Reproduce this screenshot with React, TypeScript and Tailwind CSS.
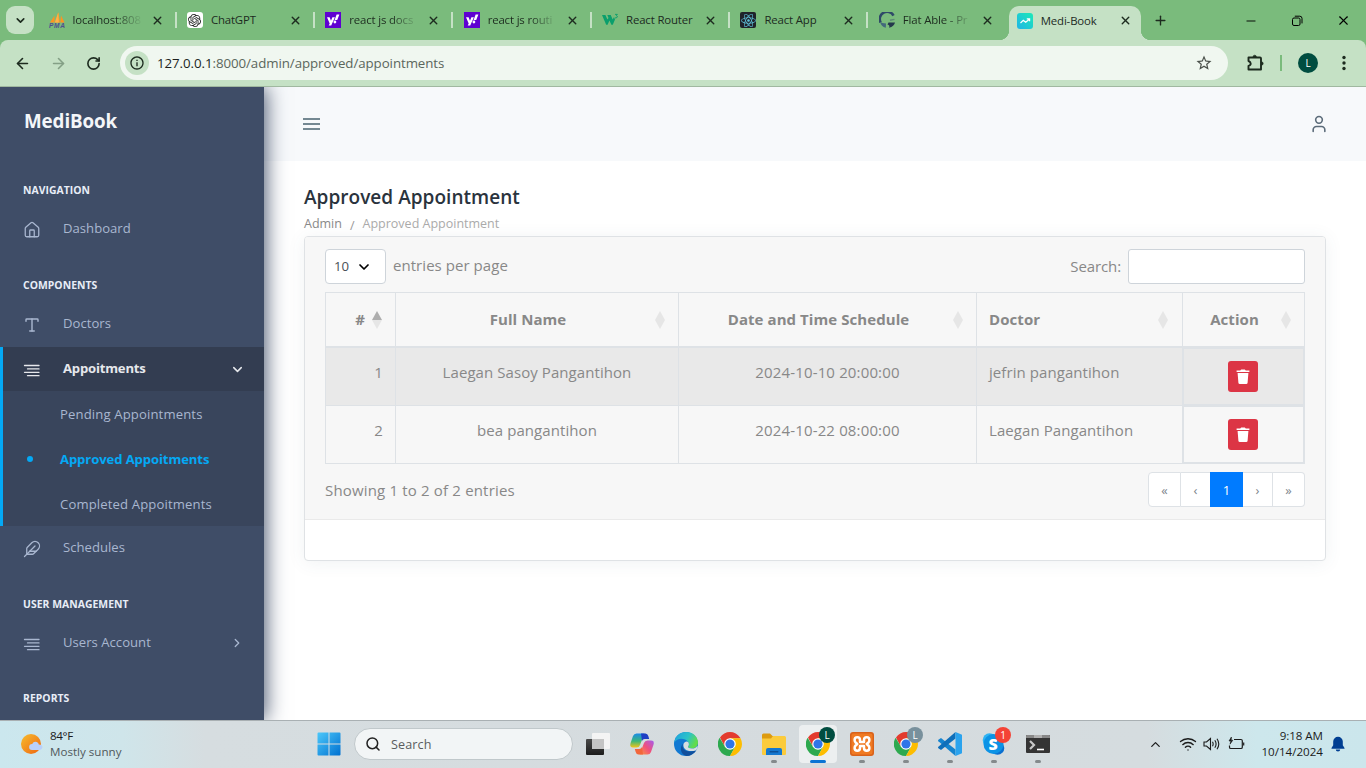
import React from "react";
import {
  ArrowLeft,
  ArrowRight,
  ChevronDown,
  ChevronRight,
  ChevronUp,
  Feather,
  Home,
  Minus,
  Plus,
  RotateCw,
  Search,
  Type,
  User,
  Wifi,
  X,
} from "lucide-react";
import { MdStarOutline, MdOutlineInfo } from "react-icons/md";
import { FaReact } from "react-icons/fa";
import { SiOpenai } from "react-icons/si";

/* ---------- favicons ---------- */

function PmaIcon() {
  return (
    <svg viewBox="0 0 16 16" className="size-4">
      <path d="M1 10.500 5.500 3.500V10.500zM5.800 10.500 9.300.3 11 10.500zM11.300 10.500 12 3.500l3.500 7z" fill="#ff9320" />
      <path d="M5.800 10.500 9.300.3l.5 10.200z" fill="#ffb347" />
      <text x="0" y="15.6" fontSize="6.6" fontWeight="800" fontStyle="italic" fill="#4f4f8e" fontFamily="Liberation Sans, sans-serif" textLength="16">PMA</text>
    </svg>
  );
}

function GptIcon() {
  return (
    <span className="flex size-4 items-center justify-center rounded-[3px] bg-white">
      <SiOpenai size={13} color="#222" />
    </span>
  );
}

function YahooIcon() {
  return (
    <svg viewBox="0 0 16 16" className="size-4">
      <rect width="16" height="16" fill="#5f01d1" />
      <path d="M2 5.2h2.6L6 8.7l1.4-3.5h2.5L6.2 13.6H3.7l1-2.2z" fill="#fff" />
      <path d="M11.6 2.6h2.8L12.2 8H9.6z" fill="#fff" />
      <circle cx="9.9" cy="10" r="1.4" fill="#fff" />
    </svg>
  );
}

function W3Icon() {
  return (
    <svg viewBox="0 0 16 16" className="size-4">
      <path d="M0 3h3.400l2 4.500L6.500 6 5.300 3h3.400l2 4.500L12 5l1 2.600-2.200 5.200H9.400L7.400 8.600 5.600 12.800H4.200z" fill="#0a9f6c" />
      <path d="M13 2.400h2.400l-1.100 1.300q1.200.1 1.200 1.100T13 6" fill="none" stroke="#0a9f6c" strokeWidth=".9" />
    </svg>
  );
}

function ReactIcon() {
  return (
    <span className="flex size-4 items-center justify-center rounded-[2px] bg-[#20232a]">
      <FaReact size={15} color="#5fc3dc" />
    </span>
  );
}

function FlatIcon() {
  return (
    <svg viewBox="0 0 16 16" className="size-4">
      <path d="M14.500 3.600A7 7 0 0 0 1.600 10.500" fill="none" stroke="#2f4a68" strokeWidth="2.600" />
      <path d="M1.200 10A7 7 0 0 0 6.800 15.700L7 11.500 3.500 11z" fill="#43697c" />
      <path d="M9.500 10.500H16q-.8 4-6 5.300 1.300-2.300-1.500-3.300z" fill="#24384c" />
      <path d="M11 8.200 15.500 7.400" stroke="#5d8a78" strokeWidth="1.400" />
    </svg>
  );
}

function MediIcon() {
  return (
    <svg viewBox="0 0 16 16" className="size-4">
      <defs>
        <linearGradient id="medi" x1="0" y1="1" x2="1" y2="0">
          <stop offset="0" stopColor="#1fb5e8" />
          <stop offset="1" stopColor="#1de9b6" />
        </linearGradient>
      </defs>
      <rect width="16" height="16" rx="3" fill="url(#medi)" />
      <path d="M3.5 10 6.3 7.4l2.4 1.8 3.6-3M9.8 5.8h2.8v2.4" fill="none" stroke="#fff" strokeWidth="1.2" />
    </svg>
  );
}

const tabs = [
  { title: "localhost:808", icon: <PmaIcon /> },
  { title: "ChatGPT", icon: <GptIcon /> },
  { title: "react js docs", icon: <YahooIcon /> },
  { title: "react js routi", icon: <YahooIcon /> },
  { title: "React Router", icon: <W3Icon /> },
  { title: "React App", icon: <ReactIcon /> },
  { title: "Flat Able - Pr", icon: <FlatIcon /> },
  { title: "Medi-Book", icon: <MediIcon />, active: true },
];

const faded = [0, 2, 3, 6];

function TabStrip() {
  return (
    <div className="flex h-10 shrink-0 items-start bg-[#7abb7c] text-[#1d2b1f]">
      <div className="mt-1.5 ml-1.5 flex size-7 items-center justify-center rounded-[9px] bg-[#c5e1c5]">
        <ChevronDown size={13} strokeWidth={3} />
      </div>
      <div className="ml-[5px] flex">
        {tabs.map((tab, i) => (
          <div
            key={i}
            className={
              tab.active
                ? "relative mt-1.5 ml-px flex h-[34px] w-[132px] items-center rounded-t-[10px] bg-[#c5e1c5] pl-2"
                : "flex h-10 w-[138.4px] items-center pl-[9.5px]"
            }
          >
            {tab.active && (
              <>
                <span className="absolute bottom-0 -left-2.5 size-2.5 bg-[radial-gradient(circle_at_0_0,transparent_10px,#c5e1c5_10.5px)]" />
                <span className="absolute -right-2.5 bottom-0 size-2.5 bg-[radial-gradient(circle_at_100%_0,transparent_10px,#c5e1c5_10.5px)]" />
              </>
            )}
            <span className={tab.active ? "-mt-[5px]" : ""}>{tab.icon}</span>
            <span
              className={
                (tab.active ? "-mt-[5px] " : "") +
                (faded.includes(i) ? "[mask-image:linear-gradient(to_right,#000_60%,transparent)] " : "") +
                "ml-2 w-[70px] text-[11.4px] leading-4 tracking-[-0.15px] whitespace-nowrap"
              }
            >
              {tab.title}
            </span>
            <X size={13} strokeWidth={2.6} className={tab.active ? "-mt-[5px] ml-2" : "ml-2"} />
            {!tab.active && i < 6 && <span className="ml-[11px] h-4 w-0.5 bg-[#c5e1c5]" />}
          </div>
        ))}
      </div>
      <Plus size={15} strokeWidth={2.2} className="mt-[13px] ml-[12.5px]" />
      <div className="mt-[13px] mr-[15px] ml-auto flex items-center gap-[33px] text-black">
        <Minus size={14} strokeWidth={1.6} />
        <svg viewBox="0 0 12 12" className="size-3" fill="none" stroke="currentColor">
          <rect x="1.5" y="3" width="7.5" height="7.5" rx="1.5" />
          <path d="M3.8 1.2h5A2.2 2.2 0 0 1 11 3.4v5" />
        </svg>
        <X size={15} strokeWidth={1.8} />
      </div>
    </div>
  );
}

function AddressBar() {
  return (
    <div className="h-[47px] shrink-0 bg-[#7abb7c]">
      <div className="flex h-full items-center rounded-t-lg border-b border-[#a0b8a0] bg-[#c5e1c5] text-[#1d2b1f]">
        <ArrowLeft size={17} strokeWidth={2.3} className="ml-[14px]" />
        <ArrowRight size={17} strokeWidth={2.3} className="ml-[19px] text-[#84a086]" />
        <RotateCw size={15} strokeWidth={2.6} className="ml-[19px]" />
        <div className="ml-[19px] flex h-[34px] w-[1108px] items-center rounded-full bg-[#f0f7f0] pl-[5px]">
          <div className="flex size-6 items-center justify-center rounded-full bg-[#c5e1c5]">
            <MdOutlineInfo size={16} />
          </div>
          <span className="mt-px ml-2 text-[13.3px] tracking-[-0.07px] text-[#5b665c]">
            <span className="text-[#1d1f1d]">127.0.0.1</span>:8000/admin/approved/appointments
          </span>
          <MdStarOutline size={18} className="mr-[15px] ml-auto text-[#4a504a]" />
        </div>
        <svg viewBox="0 0 18 18" className="ml-[18px] size-[18px]" fill="none" stroke="currentColor" strokeWidth="1.900" strokeLinejoin="round">
          <path d="M2.500 3.500H14q1 0 1 1V15.500H2.500V12q2.200-.6 2.200-2.400T2.500 7z" />
          <path d="M7 3Q7 1.200 8.700 1.200T10.400 3zM15.500 7.800q1.700 0 1.700 1.700t-1.700 1.700z" fill="currentColor" strokeWidth=".6" />
        </svg>
        <span className="ml-4 h-4 w-0.5 bg-[#7abb7c]" />
        <span className="ml-4 flex size-5 items-center justify-center rounded-full bg-[#004d40] text-[10px] text-white">L</span>
        <svg viewBox="0 0 4 16" className="ml-6 h-4 w-1" fill="#1d2b1f">
          <circle cx="2" cy="2.500" r="1.700" />
          <circle cx="2" cy="8" r="1.700" />
          <circle cx="2" cy="13.500" r="1.700" />
        </svg>
      </div>
    </div>
  );
}

/* ---------- sidebar ---------- */

function Caption({ children }: { children: React.ReactNode }) {
  return (
    <div className="h-[51px] pt-[26px] pl-[23px] text-[10.4px] leading-4 font-bold tracking-[0.04px] text-[#e8edf7]">
      {children}
    </div>
  );
}

function NavItem({ icon, label, arrow }: { icon: React.ReactNode; label: string; arrow?: boolean }) {
  return (
    <div className="flex h-11 items-center pl-[23px] text-[#a9b7d0]">
      <span className="mt-px w-10">{icon}</span>
      <span className="text-[13.1px] tracking-[0.02px]">{label}</span>
      {arrow && <ChevronRight size={14} strokeWidth={2.2} className="mr-5 ml-auto" />}
    </div>
  );
}

function AlignRightIcon() {
  return (
    <svg viewBox="0 0 18 18" className="size-[18px]" stroke="currentColor" strokeWidth="1.3" strokeLinecap="round">
      <path d="M1.500 4.500H16M4.500 7.900H16M1.500 11.300H16M4.500 14.700H16" />
    </svg>
  );
}

function Sidebar() {
  return (
    <aside className="z-10 w-[264px] shrink-0 bg-[#3f4d67] shadow-[1px_0_20px_0_#3f4d67]">
      <div className="h-[69px] pt-[20px] pl-6 text-[18.8px] leading-7 font-bold text-[#f4f6f9]">
        <span className="tracking-[-0.1px]">MediBook</span>
      </div>
      <Caption>NAVIGATION</Caption>
      <NavItem icon={<Home size={18} strokeWidth={1.7} />} label="Dashboard" />
      <Caption>COMPONENTS</Caption>
      <NavItem icon={<Type size={18} strokeWidth={1.9} />} label="Doctors" />
      <div className="mt-px border-l-[3px] border-[#04a9f5]">
        <div className="flex h-11 items-center bg-[#333d51] pl-5 text-[#e6e8ec]">
          <span className="mt-px w-10"><AlignRightIcon /></span>
          <span className="text-[13.1px] font-bold tracking-[-0.2px]">Appoitments</span>
          <ChevronDown size={15} strokeWidth={2.4} className="mr-[19px] ml-auto" />
        </div>
        <div className="bg-[#39455c] text-[13.1px] tracking-[0.14px] text-[#a9b7d0]">
          <div className="flex h-[45px] items-center pt-0.5 pl-[57px]">Pending Appointments</div>
          <div className="flex h-[45px] items-center pl-6 font-bold tracking-[-0.1px] text-[#04a9f5]">
            <span className="size-1.5 rounded-full bg-[#04a9f5]" />
            <span className="mt-0.5 ml-[27px]">Approved Appoitments</span>
          </div>
          <div className="flex h-[45px] items-center pt-0.5 pl-[57px]">Completed Appoitments</div>
        </div>
      </div>
      <NavItem icon={<Feather size={18} strokeWidth={1.7} />} label="Schedules" />
      <Caption>USER MANAGEMENT</Caption>
      <NavItem icon={<AlignRightIcon />} label="Users Account" arrow />
      <div className="-mt-px"><Caption>REPORTS</Caption></div>
    </aside>
  );
}

/* ---------- content ---------- */

function SortMark({ asc }: { asc?: boolean }) {
  return (
    <svg viewBox="0 0 10 18" className="h-[18px] w-2.5">
      <path d="M0 9 5 0l5 9z" fill={asc ? "#aeaeae" : "#e6e6e6"} />
      <path d="M0 9 5 18l5-9z" fill="#e6e6e6" />
    </svg>
  );
}

function TrashButton() {
  return (
    <span className="-ml-0.5 flex h-[31px] w-[30px] items-center justify-center rounded-[3px] bg-[#dc3545]">
      <svg viewBox="0 0 14 16" className="ml-px h-4 w-3.5" fill="#fff">
        <path d="M.6 1.500h3.600L5.200.6h3.600l1 .9h3.600v1.600H.6z" />
        <path d="M1.600 4h10.800l-.8 9.700q-.1 1.300-1.400 1.300H3.800q-1.300 0-1.400-1.300z" />
      </svg>
    </span>
  );
}

const rows = [
  { n: 1, name: "Laegan Sasoy Pangantihon", at: "2024-10-10 20:00:00", doctor: "jefrin pangantihon" },
  { n: 2, name: "bea pangantihon", at: "2024-10-22 08:00:00", doctor: "Laegan Pangantihon" },
];

const cols = "grid grid-cols-[70px_283px_298px_206px_122px] border-l border-[#dee2e6]";

function DataTable() {
  return (
    <div className="mt-2 w-[980px] tracking-[0.07px]">
      <div className={cols + " h-14 border-t border-b-2 font-bold"}>
        <div className="flex items-center justify-end border-r border-[#dee2e6] pr-[13px]">
          <span className="mr-[7px]">#</span>
          <SortMark asc />
        </div>
        <div className="flex items-center border-r border-[#dee2e6] pr-[13px]">
          <span className="flex-1 pl-[5px] text-center">Full Name</span>
          <SortMark />
        </div>
        <div className="flex items-center border-r border-[#dee2e6] pr-[13px]">
          <span className="flex-1 pl-[5px] text-center">Date and Time Schedule</span>
          <SortMark />
        </div>
        <div className="flex items-center justify-between border-r border-[#dee2e6] pr-[14px] pl-3">
          <span>Doctor</span>
          <SortMark />
        </div>
        <div className="flex items-center border-r border-[#dee2e6] pr-[13px]">
          <span className="flex-1 pl-[5px] text-center">Action</span>
          <SortMark />
        </div>
      </div>
      {rows.map((r, i) => (
        <div key={r.n} className={cols + " h-[58px] leading-6" + (i === 0 ? " bg-[#e9e9e9]" : "")}>
          <div className="border-r border-b border-[#dee2e6] pt-3 pr-3 text-right">{r.n}</div>
          <div className="border-r border-b border-[#dee2e6] pt-3 text-center">{r.name}</div>
          <div className="border-r border-b border-[#dee2e6] pt-3 text-center tracking-[0.15px]">{r.at}</div>
          <div className="border-r border-b border-[#dee2e6] pt-3 pl-3">{r.doctor}</div>
          <div className="flex justify-center border-t border-r-2 border-b-2 border-l border-[#dee2e6] pt-3">
            <TrashButton />
          </div>
        </div>
      ))}
    </div>
  );
}

function Main() {
  return (
    <main className="flex min-w-0 flex-1 flex-col bg-white">
      <header className="flex h-[74px] shrink-0 items-center justify-between bg-[#f7f9fb] pr-[37px] pl-[38px]">
        <div className="ml-px flex w-[17px] flex-col gap-[3px]">
          <span className="h-0.5 bg-[#748892]" />
          <span className="h-0.5 bg-[#748892]" />
          <span className="h-0.5 bg-[#748892]" />
        </div>
        <User size={20} strokeWidth={1.9} className="text-[#5b6b79]" />
      </header>
      <div className="pt-6 pr-10 pl-10">
        <h1 className="text-[19px] leading-6 font-semibold tracking-[0.03px] text-[#2a333d]">Approved Appointment</h1>
        <div className="mt-[5px] flex h-[22px] text-[12.5px] leading-[19px] text-[#888]">
          <span>Admin</span>
          <span className="mt-0.5 ml-2 text-[#999]">/</span>
          <span className="ml-2 text-[#aaa]">Approved Appointment</span>
        </div>
        <section className="h-[325px] w-[1022px] rounded-[4px] border border-[#dfe2e5] bg-white shadow-[0_2px_18px_0_rgba(69,90,100,0.08)]">
          <div className="h-[283px] rounded-t-[3px] border-b border-[#eaeaea] bg-[#f7f7f7] pt-3 pl-5 text-[15px] text-[#888]">
            <div className="flex h-[35px] w-[980px] items-center">
              <div className="flex h-[35px] w-[61px] items-center rounded-[4px] border border-[#ced4da] bg-white pl-2 text-[13.2px] text-[#495057]">
                <span className="mt-px">10</span>
                <ChevronDown size={16} strokeWidth={2.6} className="ml-[7px] text-black" />
              </div>
              <span className="-mt-0.5 ml-[7px] tracking-[0.05px]">entries per page</span>
              <span className="ml-auto tracking-[-0.1px]">Search:</span>
              <div className="ml-[7px] h-[35px] w-[177px] rounded-[3px] border border-[#ced4da] bg-white" />
            </div>
            <DataTable />
            <div className="mt-2 flex w-[980px] items-center justify-between">
              <span className="mt-0.5 tracking-[0.17px]">Showing 1 to 2 of 2 entries</span>
              <div className="flex h-[35px] w-[157px] rounded-[4px] text-[13px] leading-[34px] text-[#7d858c]">
                <span className="w-[33px] rounded-l-[4px] border border-[#dee2e6] bg-white text-center">«</span>
                <span className="w-[29px] border-y border-[#dee2e6] bg-white text-center">‹</span>
                <span className="w-[33px] bg-[#007bff] text-center text-[13.200px] leading-[36px] text-white">1</span>
                <span className="w-[30px] border-y border-r border-[#dee2e6] bg-white text-center">›</span>
                <span className="w-8 rounded-r-[4px] border-y border-r border-[#dee2e6] bg-white text-center">»</span>
              </div>
            </div>
          </div>
        </section>
      </div>
    </main>
  );
}

/* ---------- taskbar ---------- */

function ChromeLogo() {
  return (
    <svg viewBox="0 0 24 24" className="size-6">
      <path d="M12 6.200h10.500L22 5.400A12 12 0 0 0 2 5.400l4.800 9z" fill="#e33b2e" />
      <path d="m7 14.800-5.400-9A12 12 0 0 0 12 24l5-9z" fill="#2da94f" />
      <path d="M12 6.200h10.500A12 12 0 0 1 12 24l5-9z" fill="#fdbd00" />
      <circle cx="12" cy="12" r="5.800" fill="#fff" />
      <circle cx="12" cy="12" r="4.600" fill="#2f75e8" />
    </svg>
  );
}

function WindowsLogo() {
  return (
    <svg viewBox="0 0 24 24" className="size-6">
      <defs>
        <linearGradient id="win" x1="0" y1="0" x2="1" y2="1">
          <stop offset="0" stopColor="#4cc8fa" />
          <stop offset="1" stopColor="#0070d0" />
        </linearGradient>
      </defs>
      <path d="M1.500.5h10v11h-11v-10q0-1 1-1zM12.500.5h10q1 0 1 1v10h-11zM.5 12.500h11v11h-10q-1 0-1-1zM12.500 12.500h11v10q0 1-1 1h-10z" fill="url(#win)" />
    </svg>
  );
}

function TaskViewLogo() {
  return (
    <svg viewBox="0 0 24 24" className="size-6">
      <defs>
        <linearGradient id="tvBack" x1="0" y1="0" x2="0" y2="1">
          <stop offset="0" stopColor="#4a4a4a" />
          <stop offset="1" stopColor="#1c1c1c" />
        </linearGradient>
      </defs>
      <rect x="0" y="7" width="18" height="16" rx="1" fill="url(#tvBack)" />
      <rect x="6" y="1" width="18" height="16" rx="1" fill="#f4f4f4" />
      <rect x="6" y="7" width="12" height="10" fill="#c4c4c4" />
    </svg>
  );
}

function CopilotLogo() {
  return (
    <svg viewBox="0 0 24 24" className="size-6">
      <defs>
        <linearGradient id="copA" x1="0" y1="0" x2="0" y2="1">
          <stop offset="0" stopColor="#1c8be8" />
          <stop offset=".55" stopColor="#3cb878" />
          <stop offset="1" stopColor="#f5c518" />
        </linearGradient>
        <linearGradient id="copB" x1="1" y1="0" x2="0" y2="1">
          <stop offset="0" stopColor="#a45cf0" />
          <stop offset=".5" stopColor="#f0507c" />
          <stop offset="1" stopColor="#fb9a3c" />
        </linearGradient>
      </defs>
      <path d="M6.500 1.500h8L10 13q-.8 2.500-3.500 2.500H3Q-.8 15.500.600 11L3 4q1-2.500 3.500-2.500z" fill="url(#copA)" />
      <path d="M11 1.500h4.500Q17.600 1.500 18.300 4l.9 3h-4.500q-2 0-2.700 2z" fill="#1f3fc4" />
      <path d="M17.500 22.500h-8L14 11q.8-2.500 3.500-2.500H21q3.800 0 2.400 4.500L21 20q-1 2.500-3.500 2.500z" fill="url(#copB)" />
      <path d="M13 22.500H8.500Q6.400 22.500 5.700 20l-.9-3h4.500q2 0 2.700-2z" fill="#f2663c" />
    </svg>
  );
}

function EdgeLogo() {
  return (
    <svg viewBox="0 0 24 24" className="size-6">
      <defs>
        <linearGradient id="edgeA" x1="0" y1="0" x2="1" y2=".4">
          <stop offset="0" stopColor="#1fa0e0" />
          <stop offset=".6" stopColor="#2cc3c8" />
          <stop offset="1" stopColor="#62dc4c" />
        </linearGradient>
      </defs>
      <circle cx="12" cy="12" r="12" fill="#1279d2" />
      <path d="M.2 10.500C1.200 4 6 0 12 0c7 0 12 4.800 12 10.500 0 3.500-2.600 6-6 6-2.800 0-4.300-1-4-2 1.200-1 1.200-3 .2-4.500C11 5.500 3 5.500.2 10.500z" fill="url(#edgeA)" />
      <path d="M9 11.500c-2 5.500 3 10.500 13.300 6.700C20 22 16 24 12.500 24 7 23 5 16 9 11.500z" fill="#124f9c" />
      <path d="M14.200 10c1 1.500 1 3.500-.2 4.500-.3 1 1.200 2 4 2 2.200 0 4-.9 5-2.300l.9.300-1.600 3.700C14 21 8.500 17 9.500 12c.8-2.500 3.300-3.300 4.700-2z" fill="#d8dee0" />
    </svg>
  );
}

function FolderLogo() {
  return (
    <svg viewBox="0 0 24 24" className="size-6">
      <path d="M0 3q0-1.500 1.500-1.500H8L10.500 4H22v5H0z" fill="#dd9b10" />
      <path d="M0 6.500h9L11 4h11.500Q24 4 24 5.500V22q0 1-1 1H1q-1 0-1-1z" fill="#fbcb3c" />
      <path d="M4 23v-5q0-2 2-2h12q2 0 2 2v5z" fill="#1478d0" />
      <rect x="7.500" y="19" width="9" height="1.500" rx=".7" fill="#0c5198" />
    </svg>
  );
}

function XamppLogo() {
  return (
    <svg viewBox="0 0 24 24" className="size-6">
      <rect width="24" height="24" rx="3" fill="#d9621a" />
      <rect x="1.500" y="1.500" width="21" height="21" rx="2" fill="#f07a22" />
      <path
        d="M7.300 12 5.600 10.500Q4.600 9.500 4.600 8a2.700 2.700 0 0 1 5.400 0v2h4V8a2.700 2.700 0 0 1 5.400 0q0 1.500-1 2.500L16.700 12l1.700 1.500q1 1 1 2.500a2.700 2.700 0 0 1-5.400 0v-2h-4v2a2.700 2.700 0 0 1-5.400 0q0-1.500 1-2.500z"
        fill="none"
        stroke="#fff"
        strokeWidth="2.500"
        strokeLinejoin="round"
      />
    </svg>
  );
}

function CodeLogo() {
  return (
    <svg viewBox="0 0 24 24" className="size-6">
      <path d="M17.500 24v-6.500L3 6 .4 7.800q-.8.800 0 1.500z" fill="#1584cf" />
      <path d="M17.500 0v6.500L3 18l-2.600-1.800q-.8-.8 0-1.500z" fill="#0f6fba" />
      <path d="M17.500 0 24 2.800v18.400L17.500 24z" fill="#2aa3ee" />
    </svg>
  );
}

function SkypeLogo() {
  return (
    <svg viewBox="0 0 24 24" className="size-6">
      <circle cx="7.500" cy="8" r="6.800" fill="#2fb3f2" />
      <circle cx="15.500" cy="16" r="6.800" fill="#0a6fd0" />
      <circle cx="11.500" cy="12" r="10" fill="#0b93e6" />
      <text x="11" y="17.600" textAnchor="middle" fontSize="16" fontWeight="800" fill="#fff" fontFamily="Open Sans, sans-serif">S</text>
    </svg>
  );
}

function TerminalLogo() {
  return (
    <svg viewBox="0 0 24 24" className="size-6">
      <rect y="3" width="24" height="18" rx="1" fill="#343434" />
      <path d="M0 6V4q0-1 1-1h22q1 0 1 1v2z" fill="#888" />
      <path d="M8 3h8v3H8z" fill="#b0b0b0" />
      <path d="m4 9 4 4-4 4" fill="none" stroke="#c8c8c8" strokeWidth="2.200" />
      <path d="M11 17.500h7" stroke="#fff" strokeWidth="1.600" />
    </svg>
  );
}

const apps = [
  { icon: <TaskViewLogo /> },
  { icon: <CopilotLogo /> },
  { icon: <EdgeLogo /> },
  { icon: <ChromeLogo /> },
  { icon: <FolderLogo />, running: true },
  { icon: <ChromeLogo />, active: true, badge: "L", tone: "bg-[#004d40]" },
  { icon: <XamppLogo />, running: true },
  { icon: <ChromeLogo />, running: true, badge: "L", tone: "bg-[#78909c]" },
  { icon: <CodeLogo />, running: true },
  { icon: <SkypeLogo />, running: true, badge: "1", tone: "bg-[#f44336]" },
  { icon: <TerminalLogo />, running: true },
];

function Taskbar() {
  return (
    <footer className="z-20 flex h-12 shrink-0 items-center border-t border-[#a9b0b3] bg-[linear-gradient(90deg,#cbe7ee_0%,#cfe5ea_9%,#d6dde0_15%,#d5dbde_60%,#d5dcdf_84%,#cde7ec_92%,#cbe6ec_100%)] pb-px text-[#1b1b1b]">
      <svg viewBox="0 0 22 20" className="ml-[21px] h-5 w-[22px]">
        <defs>
          <linearGradient id="sun" x1="0" y1="0" x2="1" y2="1">
            <stop offset="0" stopColor="#f7bd2e" />
            <stop offset="1" stopColor="#ee6410" />
          </linearGradient>
        </defs>
        <circle cx="10" cy="10" r="10" fill="url(#sun)" />
        <path d="M11 16a3 3 0 0 1 .2-6q1.500-3.200 4.600-2 1.800.7 2 2.600 4 .2 3.600 3-.4 2.400-3 2.400z" fill="#b9d0fa" />
      </svg>
      <div className="ml-[7px] w-[110px] text-[11.600px] leading-4">
        <div className="tracking-[-0.35px]">84°F</div>
        <div className="text-[#50585b]">Mostly sunny</div>
      </div>
      <div className="ml-[157px]"><WindowsLogo /></div>
      <div className="ml-[13px] flex h-[32px] w-[219px] items-center rounded-full border border-[#c0c8cb] bg-[#f2f5f6] pl-2.5 text-[12.600px] text-[#5a5d5f]">
        <Search size={16} strokeWidth={2.300} className="text-[#222]" />
        <span className="mt-0.5 ml-2.5 tracking-[0.1px]">Search</span>
      </div>
      <div className="ml-[3px] flex">
        {apps.map((a, i) => (
          <div key={i} className="flex h-[46px] w-11 items-center justify-center">
            <div
              className={
                "relative flex h-[38px] w-[38px] items-center justify-center rounded-[4px]" +
                (a.active ? " bg-[#eceff0]" : "")
              }
            >
              {a.icon}
              {a.badge && (
                <span className={"absolute top-0.5 right-0.5 flex size-4 items-center justify-center rounded-full text-[10px] text-white " + a.tone}>
                  {a.badge}
                </span>
              )}
              {a.running && <span className="absolute bottom-0 h-[3px] w-1.5 rounded-full bg-[#848a8c]" />}
              {a.active && <span className="absolute bottom-0 h-[3px] w-4 rounded-full bg-[#0a74d4]" />}
            </div>
          </div>
        ))}
      </div>
      <div className="mr-[21px] ml-auto flex items-center">
        <ChevronUp size={15} strokeWidth={2} />
        <Wifi size={18} strokeWidth={1.800} className="ml-4" />
        <svg viewBox="0 0 18 16" className="ml-1.5 h-4 w-[18px]" fill="none" stroke="currentColor" strokeWidth="1.100">
          <path d="M1 6h2.500L7.500 2.500v11L3.500 10H1zM9.500 5.800q1.300 2.200 0 4.400M11.800 4.200q2.600 3.800 0 7.600M14 2.700q3.600 5.300 0 10.600" />
        </svg>
        <svg viewBox="0 0 18 16" className="ml-1.5 h-4 w-[18px]" fill="none" stroke="currentColor" strokeWidth="1.200">
          <path d="M7 3.500h7q1.300 0 1.300 1.300v6.400q0 1.300-1.300 1.300H3.800q-1.300 0-1.300-1.300V9.500M16.700 6.500v3" />
          <path d="M4.400 1 2 5h1.900L3 8.200 5.800 4.200H4.200z" fill="currentColor" strokeWidth=".6" />
        </svg>
        <div className="ml-[16px] text-right text-[11.600px] leading-4">
          <div className="tracking-[-0.05px]">9:18 AM</div>
          <div>10/14/2024</div>
        </div>
        <svg viewBox="0 0 14 16" className="ml-2 h-4 w-3.5" fill="#003e92">
          <path d="M7 .8a4.800 4.800 0 0 1 4.800 4.800v3.600L13.500 12v.800H.5V12l1.700-2.800V5.600A4.800 4.800 0 0 1 7 .8zM4.800 13.500h4.400a2.200 2 0 0 1-4.400 0z" />
        </svg>
      </div>
    </footer>
  );
}

export default function App() {
  return (
    <div className="flex h-[768px] w-[1366px] flex-col overflow-hidden bg-white font-['Open_Sans','Noto_Sans',sans-serif]">
      <TabStrip />
      <AddressBar />
      <div className="flex h-[633px] overflow-hidden">
        <Sidebar />
        <Main />
      </div>
      <Taskbar />
    </div>
  );
}
